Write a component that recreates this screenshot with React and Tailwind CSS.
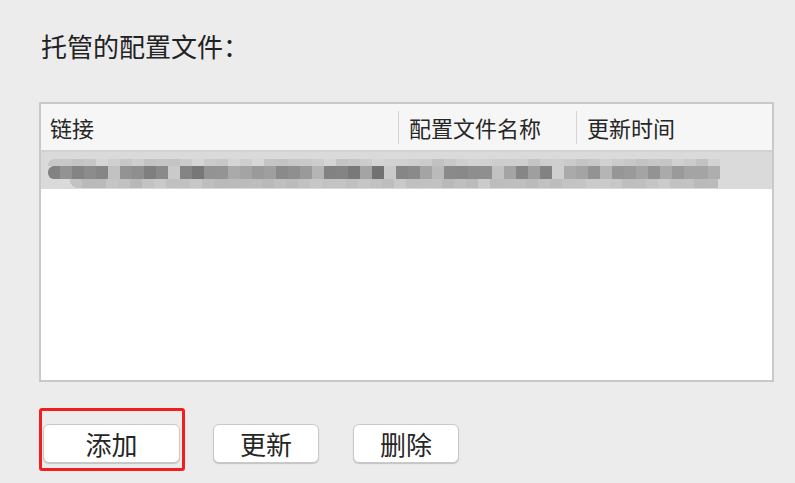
import React from 'react';

const FONT = { fontFamily: '"Noto Sans CJK SC", "Noto Sans", sans-serif' };

// redacted row: middle band shades, 12px per block
const MID = [
  0x88, 0x99, 0x8a, 0x92, 0x8c, 0xc8, 0x99, 0x95, 0x85, 0x90, 0xd0, 0x8a, 0x7d, 0x99, 0x9a,
  0xb0, 0xaa, 0xa0, 0xa5, 0x90, 0x95, 0xa0, 0xbb, 0x88, 0x8a, 0x7f, 0xaa, 0x77, 0xd0,
  0x8c, 0x90, 0xaa, 0xc0, 0x90, 0x8f, 0x94, 0x95, 0xc8, 0xaa, 0x8c, 0xa5, 0x88, 0xd5,
  0xb0, 0xaa, 0x99, 0xbb, 0x9c, 0xa0, 0xaa, 0x99, 0xb0, 0xa0, 0xaa, 0xaa, 0xb4,
];

function shade(v) {
  const h = Math.min(255, v).toString(16).padStart(2, '0');
  return `#${h}${h}${h}`;
}

function Mosaic() {
  return (
    <div className="flex flex-col pl-[7px] pt-[7px]">
      <div className="flex h-[7px] rounded-tl-[6px] overflow-hidden">
        {MID.map((v, i) => (
          <span key={i} className="w-[12px] shrink-0" style={{ backgroundColor: shade(0xc2 + ((v * 7 + i * 13) % 22)) }} />
        ))}
      </div>
      <div className="flex h-[13px] rounded-l-[6px] rounded-r-[6px] overflow-hidden">
        {MID.map((v, i) => (
          <span key={i} className="w-[12px] shrink-0" style={{ backgroundColor: shade(v - 6) }} />
        ))}
      </div>
      <div className="flex h-[9px] ml-[22px] rounded-bl-[8px] rounded-br-[8px] overflow-hidden">
        {MID.slice(2).map((v, i) => (
          <span key={i} className="w-[12px] shrink-0" style={{ backgroundColor: shade(0xb8 + ((v * 5 + i * 11) % 20)) }} />
        ))}
      </div>
    </div>
  );
}

function Button({ children, className = '' }) {
  return (
    <button
      className={`h-[39px] bg-white border border-[#c9c9c9] rounded-[6px] shadow-[0_1px_1px_rgba(0,0,0,0.18)] text-[26px] leading-none text-[#262626] ${className}`}
      style={FONT}
    >
      {children}
    </button>
  );
}

export default function App() {
  return (
    <div className="w-[795px] h-[483px] bg-[#ececec] pl-[39px] pt-[33px] overflow-hidden" style={FONT}>
      <h1 className="text-[26px] leading-[26px] text-[#222] pl-[2px]">托管的配置文件：</h1>

      {/* table */}
      <div className="mt-[43px] w-[735px] h-[280px] border-2 border-[#c9c9c9] bg-white flex flex-col">
        <div className="h-[48px] bg-[#f6f6f6] border-b-2 border-[#d2d2d2] flex items-center text-[22px] text-[#262626]">
          <div className="w-[357px] pl-[9px]">链接</div>
          <div className="w-px h-[33px] bg-[#d4d4d4]" />
          <div className="w-[177px] pl-[10px]">配置文件名称</div>
          <div className="w-px h-[33px] bg-[#d4d4d4]" />
          <div className="flex-1 pl-[10px]">更新时间</div>
        </div>
        <div className="h-[37px] bg-[#dadada]">
          <Mosaic />
        </div>
        <div className="flex-1" />
      </div>

      {/* actions */}
      <div className="mt-[42px] flex gap-[33px] pl-[4px]">
        <div className="relative">
          <Button className="w-[137px]">添加</Button>
          <div className="absolute -left-[4px] -top-[16px] w-[146px] h-[63px] border-[3px] border-[#f21d1d] rounded-[3px] pointer-events-none" />
        </div>
        <Button className="w-[106px]">更新</Button>
        <Button className="w-[106px] ml-[1px]">删除</Button>
      </div>
    </div>
  );
}
